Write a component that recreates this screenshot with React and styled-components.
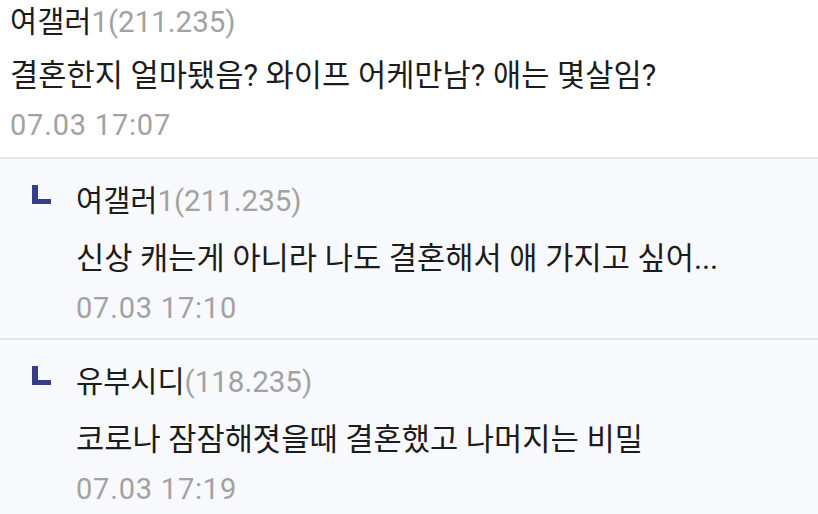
import React from "react";
import styled, { createGlobalStyle } from "styled-components";

const Global = createGlobalStyle`
  html, body { margin: 0; padding: 0; background: #ffffff; }
  body { font-family: Roboto, "Noto Sans CJK KR", sans-serif; width: 818px; height: 514px; overflow: hidden; }
`;

const List = styled.div`
  display: flex;
  flex-direction: column;
  width: 818px;
`;

const Comment = styled.div`
  display: flex;
  align-items: flex-start;
  background: ${(p) => (p.$reply ? "#f8f9fc" : "#ffffff")};
  padding: ${(p) => (p.$reply ? "24px 0 12px 32px" : "4px 0 14px 10px")};
  border-top: ${(p) => (p.$first ? "none" : "2px solid #e3e4ec")};
`;

const ReplyMark = styled.svg`
  flex: none;
  width: 20px;
  height: 20px;
  margin-top: 2px;
  margin-right: 24px;
`;

const Body = styled.div`
  display: flex;
  flex-direction: column;
`;

const Name = styled.div`
  font-size: 29.5px;
  line-height: 36px;
  color: #1c1c1c;
  white-space: nowrap;
`;

const Ip = styled.span`
  color: #a2a2a2;
`;

const Text = styled.div`
  font-size: 30.7px;
  line-height: 36px;
  color: #1c1c1c;
  margin-top: ${(p) => (p.$reply ? "22px" : "18px")};
  white-space: nowrap;
`;

const Date = styled.div`
  font-size: 29px;
  letter-spacing: 0.8px;
  line-height: 36px;
  color: #a2a2a2;
  margin-top: 13px;
`;

const data = [
  { nick: "여갤러", ip: "1(211.235)", text: "결혼한지 얼마됐음? 와이프 어케만남? 애는 몇살임?", date: "07.03 17:07" },
  { reply: true, nick: "여갤러", ip: "1(211.235)", text: "신상 캐는게 아니라 나도 결혼해서 애 가지고 싶어...", date: "07.03 17:10" },
  { reply: true, nick: "유부시디", ip: "(118.235)", text: "코로나 잠잠해졋을때 결혼했고 나머지는 비밀", date: "07.03 17:19" },
];

export default function App() {
  return (
    <>
      <Global />
      <List>
        {data.map((c, i) => (
          <Comment key={i} $reply={c.reply} $first={i === 0}>
            {c.reply && (
              <ReplyMark viewBox="0 0 20 20">
                <path d="M0 0 H6 V14 H19 V19 H0 Z" fill="#373d86" />
              </ReplyMark>
            )}
            <Body>
              <Name>
                {c.nick}
                <Ip>{c.ip}</Ip>
              </Name>
              <Text $reply={c.reply}>{c.text}</Text>
              <Date>{c.date}</Date>
            </Body>
          </Comment>
        ))}
      </List>
    </>
  );
}
